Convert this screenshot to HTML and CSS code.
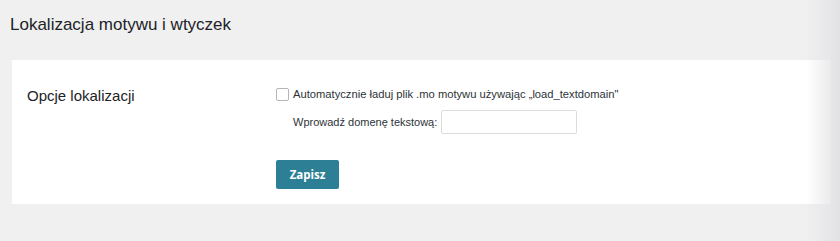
FILE: index.html
```html
<!DOCTYPE html>
<html lang="pl">
<head>
    <meta charset="UTF-8">
    <title>Lokalizacja motywu i wtyczek</title>
    <link rel="stylesheet" href="styles.css">
</head>
<body>
    <div class="wrap">
        <h1 class="page-title">Lokalizacja motywu i wtyczek</h1>
        <div class="card">
            <div class="card-label">Opcje lokalizacji</div>
            <form class="card-fields">
                <label class="check-row">
                    <span class="checkbox"></span>
                    Automatycznie ładuj plik .mo motywu używając „load_textdomain"
                </label>
                <div class="domain-row">
                    <label for="domain">Wprowadź domenę tekstową:</label>
                    <input type="text" id="domain" class="text-input">
                </div>
                <button type="button" class="save-btn">Zapisz</button>
            </form>
        </div>
    </div>
    <div class="edge-fade"></div>
</body>
</html>
```

FILE: styles.css
```css
* {
    margin: 0;
    padding: 0;
    box-sizing: border-box;
}

body {
    background: #f0f0f1;
    font-family: "Liberation Sans", Arial, sans-serif;
    color: #1d2327;
    width: 840px;
    height: 241px;
    overflow: hidden;
}

.wrap {
    padding: 14px 9px 0 12px;
}

.page-title {
    font-size: 17px;
    font-weight: 400;
    line-height: 22px;
    margin-left: -2px;
    margin-bottom: 24px;
}

.card {
    background: #fff;
    height: 144px;
    display: flex;
    padding: 26px 0 0 15px;
}

.card-label {
    width: 249px;
    font-size: 15px;
    line-height: 20px;
}

.card-fields {
    display: flex;
    flex-direction: column;
    font-size: 11.2px;
    color: #2c3338;
}

.check-row {
    display: flex;
    align-items: center;
    gap: 4px;
    height: 14px;
    margin-top: 1px;
}

.checkbox {
    width: 13px;
    height: 13px;
    border: 1px solid #b5b5b5;
    border-radius: 2px;
    background: #fff;
}

.domain-row {
    display: flex;
    align-items: center;
    gap: 4px;
    margin-top: 9px;
    padding-left: 17px;
}

.domain-row label {
    font-size: 11px;
}

.text-input {
    width: 136px;
    height: 24px;
    border: 1px solid #dcdcde;
    border-radius: 2px;
    outline: none;
}

.save-btn {
    margin-top: 26px;
    width: 63px;
    height: 29px;
    border: none;
    border-radius: 2px;
    background: #2d7f95;
    color: #fff;
    font-family: "Open Sans", sans-serif;
    font-size: 11.5px;
    font-weight: 700;
    cursor: pointer;
}

.edge-fade {
    position: absolute;
    top: 0;
    right: 0;
    width: 34px;
    height: 241px;
    background: linear-gradient(to right, rgba(230, 230, 232, 0), rgba(225, 225, 228, 0.9));
}
```
